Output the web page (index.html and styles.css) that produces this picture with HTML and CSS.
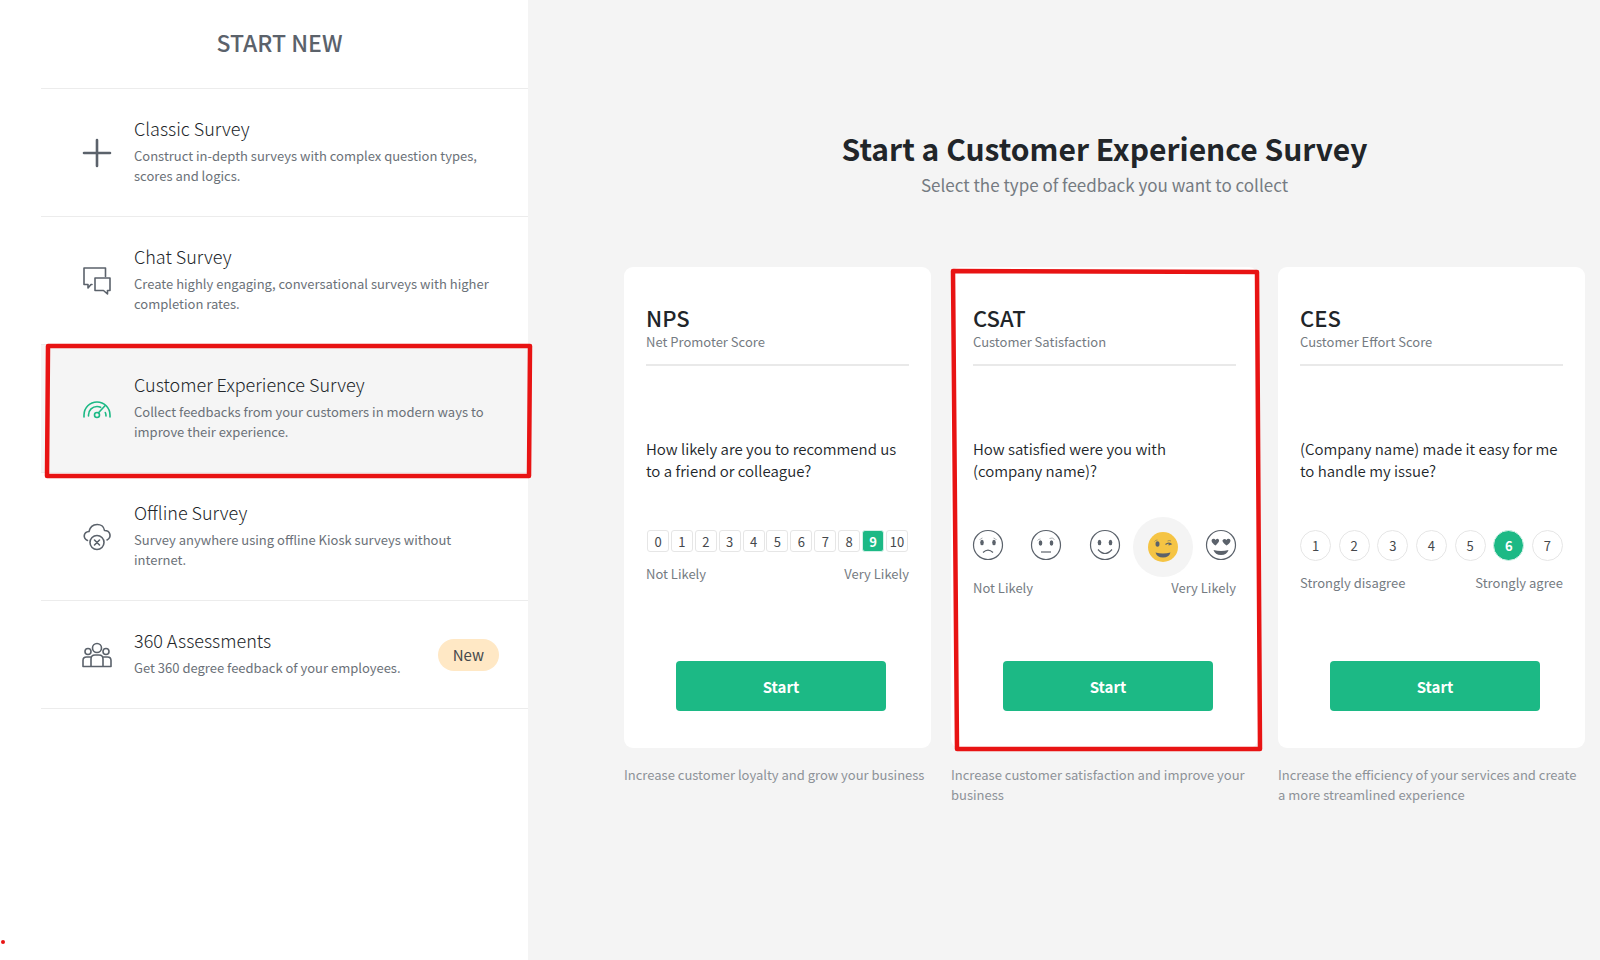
FILE: index.html
```html
<!DOCTYPE html>
<html lang="en">
<head>
    <meta charset="UTF-8">
    <meta name="viewport" content="width=device-width, initial-scale=1.0">
    <title>Start New Survey</title>
    <link rel="stylesheet" href="styles.css">
</head>
<body>
    <div class="layout">
        <nav class="sidebar">
            <h2 class="sidebar-title">START NEW</h2>
            <ul class="survey-list">
                <li>
                    <a href="#classic" class="survey">
                        <svg class="icon plus" viewBox="0 0 28 28"><path d="M14 1v26M1 14h26"/></svg>
                        <div class="survey-text">
                            <h3>Classic Survey</h3>
                            <p>Construct in-depth surveys with complex question types, scores and logics.</p>
                        </div>
                    </a>
                </li>
                <li>
                    <a href="#chat" class="survey">
                        <svg class="icon" viewBox="0 0 28 28"><path d="M9 17.500H8L5 21v-3.500H1V1h21.500v8.500"/><path d="M12 11h15v12.500h-2.500V27l-4-3.500H12z"/></svg>
                        <div class="survey-text">
                            <h3>Chat Survey</h3>
                            <p>Create highly engaging, conversational surveys with higher completion rates.</p>
                        </div>
                    </a>
                </li>
                <li>
                    <a href="#customer" class="survey active">
                        <svg class="icon" viewBox="0 0 28 28"><path d="M1 22v-2a13 13 0 0 1 26 0v2"/><path d="M5.500 21v-1c0-5 4-8.500 8.500-8.500 1.500 0 2.600.3 3.600.8M22.300 17.500c.5 1 .7 2.300.7 3.500M15.500 17.800l6.500-7"/><circle cx="14" cy="20" r="2.500"/></svg>
                        <div class="survey-text">
                            <h3>Customer Experience Survey</h3>
                            <p>Collect feedbacks from your customers in modern ways to improve their experience.</p>
                        </div>
                        <svg class="marker" viewBox="0 0 487 129" preserveAspectRatio="none"><path d="M7 1h482l-1 132H6z"/></svg>
                    </a>
                </li>
                <li>
                    <a href="#offline" class="survey">
                        <svg class="icon" viewBox="0 0 28 28"><path d="M4.500 17.500C-.5 15 .5 9 6 8.500 8-1 20.500-.5 21.500 7.500c6 0 7.500 7 2.500 9.500"/><circle cx="14" cy="19.500" r="7"/><path d="m11.500 17 5 5m0-5-5 5"/></svg>
                        <div class="survey-text">
                            <h3>Offline Survey</h3>
                            <p>Survey anywhere using offline Kiosk surveys without internet.</p>
                        </div>
                    </a>
                </li>
                <li>
                    <a href="#assessments" class="survey">
                        <svg class="icon" viewBox="0 0 28 28"><circle cx="14" cy="7" r="4.500"/><circle cx="5" cy="10.500" r="3"/><circle cx="23" cy="10.500" r="3"/><path d="M8 25.500V18q0-4 4-4h4q4 0 4 4v7.500M8 16H3.500Q0 16 0 19.500v6h28v-6Q28 16 24.500 16H20"/></svg>
                        <div class="survey-text">
                            <h3>360 Assessments</h3>
                            <p>Get 360 degree feedback of your employees.</p>
                        </div>
                        <span class="badge">New</span>
                    </a>
                </li>
            </ul>
        </nav>

        <main class="content">
            <h1>Start a Customer Experience Survey</h1>
            <p class="subtitle">Select the type of feedback you want to collect</p>

            <div class="cards">
                <section>
                    <div class="card">
                        <h2>NPS</h2>
                        <p class="card-name">Net Promoter Score</p>
                        <div class="card-body">
                            <p class="question">How likely are you to recommend us to a friend or colleague?</p>
                            <div class="scale squares">
                                <span>0</span><span>1</span><span>2</span><span>3</span><span>4</span><span>5</span><span>6</span><span>7</span><span>8</span><span class="selected">9</span><span>10</span>
                            </div>
                            <div class="labels"><span>Not Likely</span><span>Very Likely</span></div>
                        </div>
                        <button class="btn">Start</button>
                    </div>
                    <p class="caption">Increase customer loyalty and grow your business</p>
                </section>

                <section>
                    <div class="card">
                        <h2>CSAT</h2>
                        <p class="card-name">Customer Satisfaction</p>
                        <div class="card-body">
                            <p class="question">How satisfied were you with (company name)?</p>
                            <div class="scale faces">
                                <svg class="face" viewBox="0 0 30 30"><circle class="line" cx="15" cy="15" r="14.500"/><ellipse cx="9" cy="12.500" rx="1.800" ry="2.800"/><ellipse cx="21" cy="12.500" rx="1.800" ry="2.800"/><path class="line" d="M10 22.500q5-5 10 0"/><path class="brow" d="M6.500 10q1-1.500 3-2M23.500 10q-1-1.500-3-2"/></svg>
                                <svg class="face" viewBox="0 0 30 30"><circle class="line" cx="15" cy="15" r="14.500"/><ellipse cx="9.500" cy="13" rx="1.800" ry="2.800"/><ellipse cx="20.500" cy="13" rx="1.800" ry="2.800"/><path class="line" d="M10 22h10"/><path class="brow" d="M6.500 10.500q1-1.500 3-1.500M18.500 8.500q3-1.500 5 1"/></svg>
                                <svg class="face" viewBox="0 0 30 30"><circle class="line" cx="15" cy="15" r="14.500"/><ellipse cx="9.500" cy="12.500" rx="1.800" ry="2.800"/><ellipse cx="20.500" cy="12.500" rx="1.800" ry="2.800"/><path class="line" d="M8 19.500q7 8 14 0"/></svg>
                                <span class="face-selected">
                                    <svg class="face" viewBox="0 0 30 30"><circle class="yellow" cx="15" cy="15" r="15"/><ellipse cx="9.500" cy="12" rx="2" ry="2.800"/><path class="brow" d="M6.500 9.500q1-1.500 3-1.500M19.500 9q2-1 3.500 0"/><path class="line" d="M17.500 12.500q3-2.500 5.500-.5l-2.500 1"/><path d="M7.500 20.500q7.500 2 15 0-1.500 5-7.500 5t-7.500-5z"/></svg>
                                </span>
                                <svg class="face" viewBox="0 0 30 30"><circle class="line" cx="15" cy="15" r="14.500"/><path d="M9.500 15.500C5 12.500 5 10 6.500 9q2-1 3 1 2-2 3.200-.500c1.200 1.800-.7 3.700-3.200 6zM20.500 15.500c-4.500-3.500-4.500-5-3.300-6q1.800-1 3.300.5 1-2 3-1c1.700 1.200 1.500 3.500-3 6.500zM7.500 20q7.500 2 15 0-1.500 5-7.500 5t-7.500-5z"/></svg>
                            </div>
                            <div class="labels"><span>Not Likely</span><span>Very Likely</span></div>
                        </div>
                        <button class="btn">Start</button>
                        <svg class="marker" viewBox="0 0 307 481" preserveAspectRatio="none"><path d="m2 4 304 1 3 477H6z"/></svg>
                    </div>
                    <p class="caption">Increase customer satisfaction and improve your business</p>
                </section>

                <section>
                    <div class="card">
                        <h2>CES</h2>
                        <p class="card-name">Customer Effort Score</p>
                        <div class="card-body">
                            <p class="question">(Company name) made it easy for me to handle my issue?</p>
                            <div class="scale circles">
                                <span>1</span><span>2</span><span>3</span><span>4</span><span>5</span><span class="selected">6</span><span>7</span>
                            </div>
                            <div class="labels"><span>Strongly disagree</span><span>Strongly agree</span></div>
                        </div>
                        <button class="btn">Start</button>
                    </div>
                    <p class="caption">Increase the efficiency of your services and create a more streamlined experience</p>
                </section>
            </div>
        </main>
    </div>
    <span class="dot"></span>
</body>
</html>
```
FILE: styles.css
```css
* {
    box-sizing: border-box;
    margin: 0;
    padding: 0;
}

body {
    font-family: "Noto Sans CJK SC", "Noto Sans", sans-serif;
    color: #212529;
    background: #f4f4f4;
}

.layout {
    display: flex;
    min-height: 100vh;
}

/* left column */
.sidebar {
    width: 33%;
    padding-left: 41px;
    background: #fff;
}

.sidebar-title {
    padding: 24px 10px 28px 0;
    border-bottom: 1px solid #ececec;
    font-size: 23px;
    line-height: 36px;
    font-weight: 500;
    text-align: center;
    color: #5b626b;
}

.survey-list {
    list-style: none;
}

.survey {
    position: relative;
    display: flex;
    align-items: center;
    gap: 23px;
    padding: 25px 29px 24px 42px;
    border-bottom: 1px solid #ececec;
    color: #212529;
    text-decoration: none;
}

.survey.active {
    background: #f5f5f5;
}

.icon {
    flex: none;
    width: 28px;
    height: 28px;
    overflow: visible;
    fill: none;
    stroke: #5b626b;
    stroke-width: 1.6;
    stroke-linecap: round;
    stroke-linejoin: round;
}

.icon.plus {
    stroke-width: 2.6;
}

.active .icon {
    stroke: #1cb985;
}

.survey-text {
    flex: 1;
    padding-bottom: 6px;
}

.survey h3 {
    margin-bottom: 4px;
    font-size: 18px;
    line-height: 28px;
    font-weight: 300;
}

.survey p {
    font-size: 13px;
    line-height: 20px;
    color: #6b7178;
}

.badge {
    padding: 0 15px;
    border-radius: 16px;
    background: #ffe8c5;
    font-size: 15px;
    line-height: 32px;
    color: #45484c;
}

/* hand drawn red frames */
.marker {
    position: absolute;
    top: 0;
    left: 0;
    width: 100%;
    height: 100%;
    overflow: visible;
    fill: none;
    stroke: #e81313;
    stroke-width: 4.5;
    stroke-linejoin: round;
    pointer-events: none;
    z-index: 1;
}

.dot {
    position: absolute;
    left: 1px;
    bottom: 16px;
    width: 4px;
    height: 4px;
    border-radius: 50%;
    background: #e81313;
}

/* right column */
.content {
    flex: 1;
    padding: 127px 15px 40px 96px;
}

h1 {
    font-size: 30px;
    line-height: 42px;
    text-align: center;
}

.subtitle {
    font-size: 17px;
    line-height: 32px;
    text-align: center;
    color: #757b82;
}

.cards {
    display: grid;
    grid-template-columns: repeat(3, 1fr);
    gap: 20px;
    margin-top: 66px;
}

.card {
    position: relative;
    padding: 36px 22px 37px;
    border-radius: 9px;
    background: #fff;
}

.card h2 {
    font-size: 22px;
    line-height: 29px;
    font-weight: 500;
}

.card-name {
    padding-bottom: 12px;
    border-bottom: 2px solid #e9e9e9;
    font-size: 13px;
    line-height: 20px;
    color: #757b82;
}

.card-body {
    min-height: 295px;
    padding-top: 72px;
}

.question {
    margin-bottom: 48px;
    font-size: 15px;
    line-height: 22px;
    font-weight: 350;
}

.scale {
    display: flex;
    justify-content: space-between;
    font-size: 13px;
    color: #45484c;
}

.scale span {
    display: flex;
    align-items: center;
    justify-content: center;
}

.squares {
    padding: 0 1px;
}

.squares span {
    width: 22px;
    height: 22px;
    border: 1px solid #e6e6e6;
    border-radius: 3px;
}

.circles span {
    width: 31px;
    height: 31px;
    border: 1px solid #e6e6e6;
    border-radius: 50%;
}

.scale .selected {
    border-color: #d2f1e7;
    background: #1cb985;
    font-weight: bold;
    color: #fff;
}

.face {
    width: 30px;
    height: 30px;
    overflow: visible;
    fill: #5b626b;
}

.face .line,
.face .brow {
    fill: none;
    stroke: #5b626b;
    stroke-width: 1.2;
}

.face .brow {
    stroke-width: 0.5;
}

.face .yellow {
    fill: #f5c444;
}

.scale .face-selected {
    width: 60px;
    height: 60px;
    margin: -13px -15px -17px;
    border-radius: 50%;
    background: #f4f4f4;
}

.labels {
    display: flex;
    justify-content: space-between;
    margin-top: 12px;
    font-size: 13px;
    line-height: 20px;
    color: #757b82;
}

.faces + .labels {
    margin-top: 18px;
}

.btn {
    display: block;
    width: calc(100% - 53px);
    height: 50px;
    margin: 0 23px 0 30px;
    border: none;
    border-radius: 4px;
    background: #1cb985;
    font-family: inherit;
    font-size: 15px;
    font-weight: bold;
    color: #fff;
    cursor: pointer;
}

.caption {
    margin-top: 17px;
    font-size: 13px;
    line-height: 20px;
    color: #8d9298;
}
```
